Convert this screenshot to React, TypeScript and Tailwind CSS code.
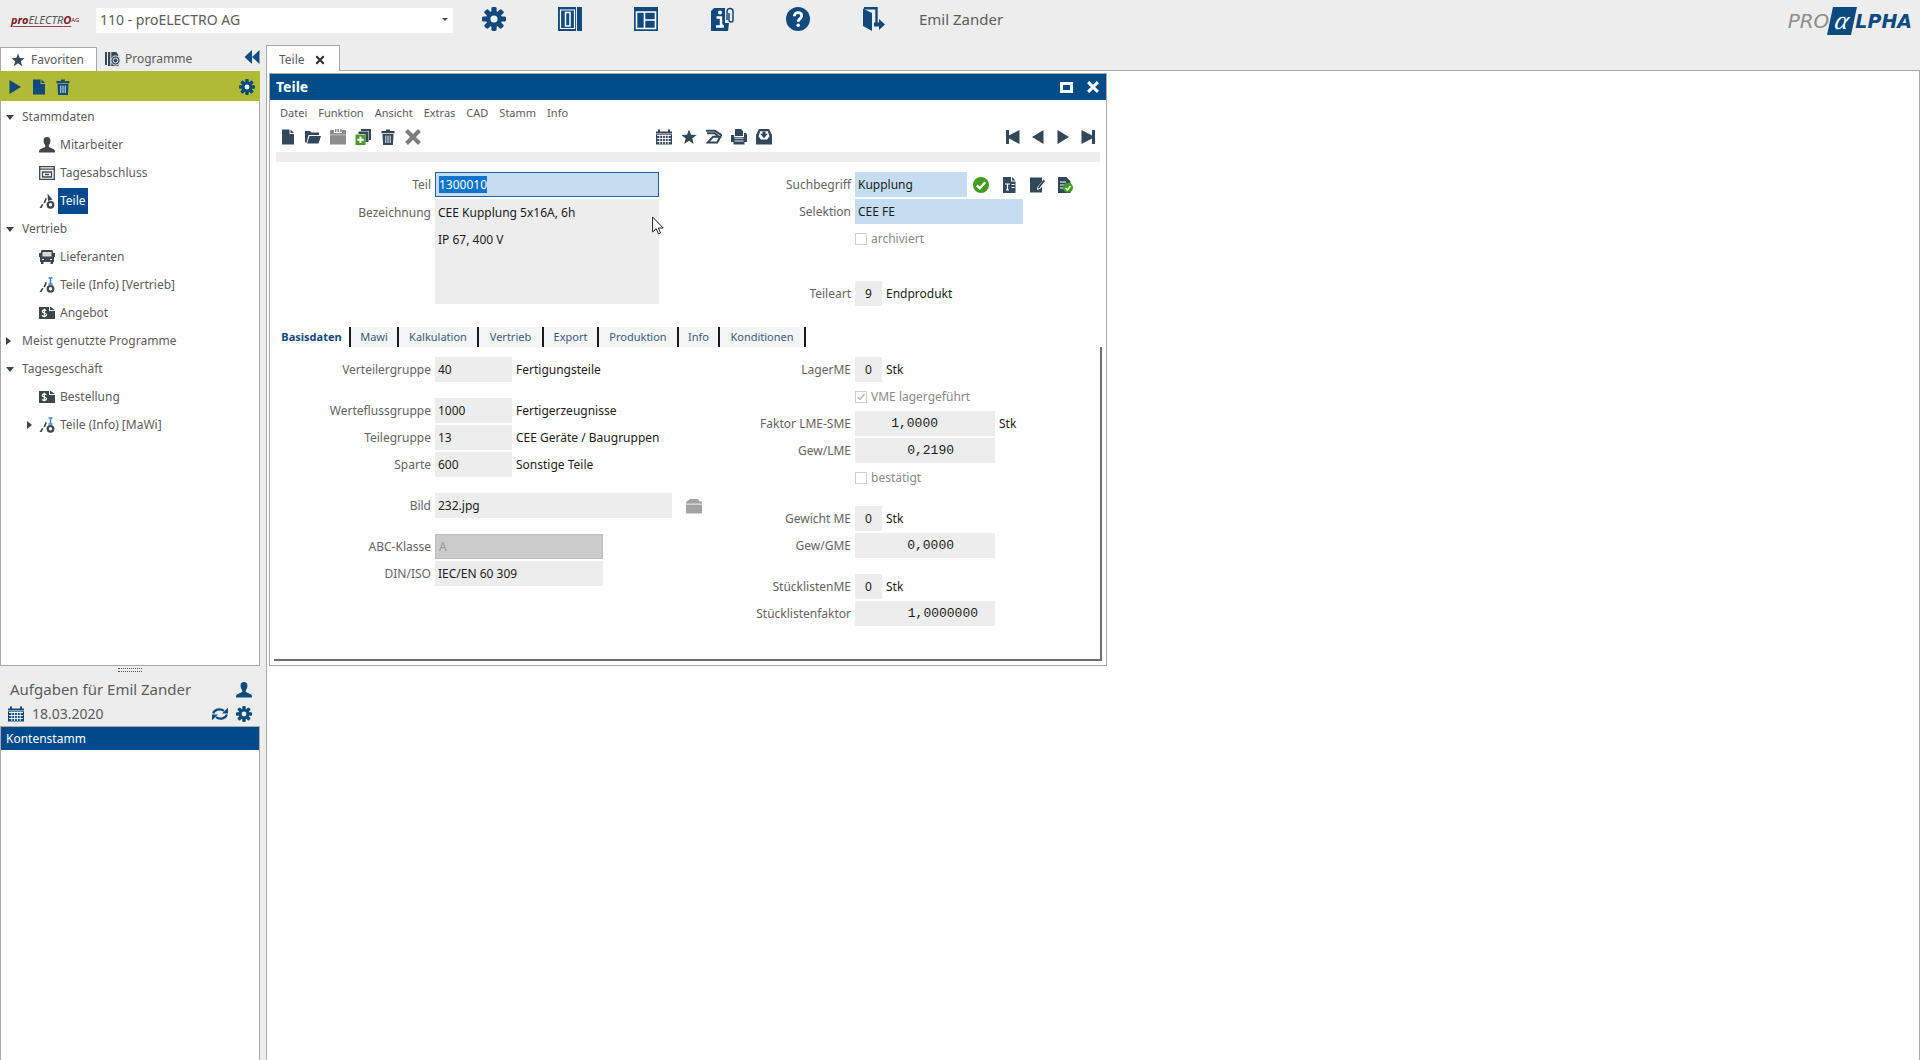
import React, { useEffect, useId, useRef } from "react";

type IconProps = { className?: string };

function Svg({ className = "size-4", box = 16, children }: IconProps & { box?: number; children: React.ReactNode }) {
  return (
    <svg viewBox={`0 0 ${box} ${box}`} className={className} fill="currentColor" aria-hidden="true">
      {children}
    </svg>
  );
}

const Gear = ({ className }: IconProps) => (
  <Svg className={className} box={24}>
    {[0, 45, 90, 135].map((a) => (
      <rect key={a} x="9.4" y="0" width="5.2" height="24" rx="1.4" transform={`rotate(${a} 12 12)`} />
    ))}
    <circle cx="12" cy="12" r="8" />
    <circle cx="12" cy="12" r="3.6" className="fill-[#f1f1f1]" />
  </Svg>
);
const SidePanel = ({ className }: IconProps) => (
  <Svg className={className} box={24}>
    <path d="M0 0h24v24H0z" />
    <path d="M2.500 3h14v18.500h-14z" fill="none" stroke="#fff" strokeWidth="1.2" />
    <path d="M7.500 5.500h4.500V19H7.500z" fill="none" stroke="#fff" strokeWidth="1.500" />
    <path d="M18.500 0v24" stroke="#dbe6ef" strokeWidth="1" />
  </Svg>
);
const LayoutGrid = ({ className }: IconProps) => (
  <Svg className={className} box={24}>
    <path d="M0 0h24v24H0z" />
    <path d="M2.500 5h19v16.500h-19zM10.500 5v16.500M10.500 13h11" fill="none" stroke="#fff" strokeWidth="1.6" />
  </Svg>
);
const InfoClip = ({ className }: IconProps) => (
  <Svg className={className} box={24}>
    <path d="M1 4l3-3h11v15h4l-1 8H1z" />
    <circle cx="10" cy="5.500" r="2" fill="#fff" />
    <path d="M6.500 10.500H11v8h2M6 19.500h8" fill="none" stroke="#fff" strokeWidth="2.4" />
    <path d="M17 13V4.500a3 3 0 0 1 6 0v8.500a2 2 0 0 1-4 0V6" fill="none" stroke="currentColor" strokeWidth="1.500" />
  </Svg>
);
const Help = ({ className }: IconProps) => (
  <Svg className={className} box={24}>
    <circle cx="12" cy="12" r="12" />
    <path d="M8.300 9.300c0-5 7.600-4.800 7.400-.3-.1 2.600-3.500 2.600-3.500 5.700" fill="none" stroke="#fff" strokeWidth="2.800" />
    <circle cx="12.200" cy="18.300" r="1.700" fill="#fff" />
  </Svg>
);
const Exit = ({ className }: IconProps) => (
  <Svg className={className} box={24}>
    <path d="M1 1.500L10 6v18l-9-5z" />
    <path d="M2 1.200h12.500V16" fill="none" stroke="currentColor" strokeWidth="2.400" />
    <path d="M12 15.500h5V12l6 5.500-6 5.500v-3.500h-5z" />
  </Svg>
);
const Star = ({ className }: IconProps) => (
  <Svg className={className}>
    <path d="M8 .5l2 5.200 5.600.2-4.400 3.500 1.600 5.600L8 11.800 3.200 15l1.600-5.600L.4 5.900 6 5.700z" />
  </Svg>
);
const Programs = ({ className }: IconProps) => (
  <Svg className={className}>
    <path d="M0 1h2v13H0zM3 1h2.300v14H3zM6.300 1h5l2 3v11h-7z" />
    <circle cx="10.500" cy="9.500" r="4.600" stroke="#ededed" strokeWidth="1" />
    <circle cx="10.500" cy="9.500" r="2.400" fill="none" stroke="#ededed" strokeWidth="1" />
  </Svg>
);
const Collapse = ({ className }: IconProps) => (
  <Svg className={className}>
    <path d="M8 1v14L.5 8zM15.500 1v14L8 8z" />
  </Svg>
);
const Page = ({ className }: IconProps) => (
  <Svg className={className}>
    <path d="M2 .5h7.500V5H14v10.500H2z" />
    <path d="M10.500.5L14 4h-3.500z" />
  </Svg>
);
const Trash = ({ className }: IconProps) => (
  <Svg className={className}>
    <path d="M1.500 2H6V.5h4V2h4.500v2.200h-13zM2.500 5h11l-.6 11H3.100z" />
    <path d="M5.800 6.500V14M8 6.500V14M10.200 6.500V14" stroke="#fff" strokeWidth=".9" />
  </Svg>
);
const Person = ({ className }: IconProps) => (
  <Svg className={className}>
    <path d="M8 0c2.400 0 3.500 1.700 3.400 3.900C11.300 6 10.600 7.300 9.800 8v2l5 2.300c.8.400 1.200 1.300 1.200 3.200H0c0-1.900.4-2.800 1.200-3.200l5-2.300V8c-.8-.7-1.500-2-1.600-4.100C4.500 1.700 5.600 0 8 0z" />
  </Svg>
);
const DayEnd = ({ className }: IconProps) => (
  <Svg className={className}>
    <path d="M.7 1.700h14.600v12.600H.7z" fill="none" stroke="currentColor" strokeWidth="1.300" />
    <path d="M.7 4.200h14.600M3.500 7h9v5h-9zM6 9.500h4" fill="none" stroke="currentColor" strokeWidth="1.300" />
  </Svg>
);
const Parts = ({ className, info }: IconProps & { info?: boolean }) => (
  <Svg className={className}>
    <path d="M.5 15L3 11l1.500.6-2 3.400zM4.500 9.500L6.500 5l1.500.5-2 5z" />
    <circle cx="11.500" cy="11.800" r="2.800" fill="none" stroke="currentColor" strokeWidth="2.200" />
    {info ? (
      <path d="M9.500 1h4M11.500 1v6M9.500 7h4" stroke="#3f86bd" strokeWidth="1.500" />
    ) : (
      <path d="M8.500.5l5 6-4.500 1.500z" />
    )}
  </Svg>
);
const Truck = ({ className }: IconProps) => (
  <Svg className={className}>
    <path d="M2.500 1h11l.8 3H16v4h-1v5h-1v2h-2.500v-2h-7v2H2v-2H1V8H0V4h1.700z" />
    <path d="M3.500 3h9v4.500h-9z" fill="#d5d9dc" />
    <path d="M3 10.500h2M11 10.500h2" stroke="#fff" strokeWidth="1.200" />
  </Svg>
);
const MoneyDoc = ({ className }: IconProps) => (
  <Svg className={className}>
    <path d="M0 2h10v4h6v8H0z" />
    <path d="M11 1.500l4.800 3.500H11z" />
    <path d="M7.300 5.700c-1-1.200-4-1-4 .7 0 2 4.200 1.200 4.200 3.400 0 1.800-3.400 2-4.500.5M5.400 3.800v8.400" fill="none" stroke="#fff" strokeWidth="1.200" />
  </Svg>
);
const Calendar = ({ className }: IconProps) => (
  <Svg className={className}>
    <path d="M0 2.500h2V.5h2v2h8v-2h2v2h2v13H0z" />
    <path d="M1 6.500h14M1 9.500h14M1 12.500h14M3.800 5.500v9.500M6.600 5.500v9.500M9.400 5.500v9.500M12.200 5.500v9.500" stroke="#fff" strokeWidth=".9" />
    <path d="M0 4.800h16" stroke="#fff" strokeWidth=".7" />
  </Svg>
);
const Refresh = ({ className }: IconProps) => (
  <Svg className={className}>
    <path d="M1.200 7.500C2 3.800 8 1.800 12 4.800M14.800 8.500C14 12.200 8 14.200 4 11.200" fill="none" stroke="currentColor" strokeWidth="2.200" />
    <path d="M10 7.500h6V1.800zM6 8.500H0v5.700z" />
  </Svg>
);
const FolderOpen = ({ className }: IconProps) => (
  <Svg className={className}>
    <path d="M0 2h5l1.500 1.500H14V6H3.500L1.500 14 0 13z" />
    <path d="M4.500 7H16l-2.500 7.500H2.200z" />
  </Svg>
);
const Folder = ({ className }: IconProps) => (
  <Svg className={className}>
    <path d="M0 4l4-3h8l1 2 3 .5V6H0zM0 6.500h16v9H0z" />
    <path d="M0 5.800h16" stroke="#d5d5d5" strokeWidth=".8" />
  </Svg>
);
const Clipboard = ({ className }: IconProps) => (
  <Svg className={className}>
    <path d="M0 1h4v3h8V1h4v14.500H0z" />
    <path d="M5 0h1.500v3H5zM7.500 0H9v3H7.500zM10 0h1.500v3H10z" />
    <path d="M0 5.800h16" stroke="#cfcfcf" strokeWidth=".8" />
  </Svg>
);
const CopyAdd = ({ className }: IconProps) => (
  <Svg className={className}>
    <path d="M6 0h10v11h-2V2H6zM3.500 2.500h10V13h-3V5h-7z" />
    <path d="M.5 5.500h10V16H.5z" className="fill-[#4b9a2c]" />
    <path d="M5.500 7.500v6.500M2.300 10.700h6.500" stroke="#fff" strokeWidth="2" />
  </Svg>
);
const Cross = ({ className }: IconProps) => (
  <Svg className={className}>
    <path d="M1.500 1.500l13 13M14.500 1.500l-13 13" stroke="currentColor" strokeWidth="4" />
  </Svg>
);
const Flow = ({ className }: IconProps) => (
  <Svg className={className}>
    <path d="M0 1.800h9L15.200 6l-4 7.500H1.800L7 7.800h6L8.500 4.300H1" fill="none" stroke="currentColor" strokeWidth="2" />
  </Svg>
);
const Printer = ({ className }: IconProps) => (
  <Svg className={className}>
    <path d="M4 0h6l2 2v5H4zM0 6h3.200v2H13V4h2l1 2v7h-2.500v2.500h-11V13H0z" />
    <path d="M3.500 9.200h9M3.500 12h9" stroke="#fff" strokeWidth=".9" />
  </Svg>
);
const Archive = ({ className }: IconProps) => (
  <Svg className={className}>
    <path d="M3 0h10l3 6v9.500H0V6z" />
    <path d="M4.200 2.200h7.600l1.700 5.300-2.500 3H5l-2.500-3z" fill="#fff" />
    <path d="M6.500 2.500h3v2.300h2.300L8 9.300 4.200 4.800h2.300z" />
  </Svg>
);
const First = ({ className }: IconProps) => (
  <Svg className={className}>
    <path d="M1 1h3v5.500L14.500 1v14L4 9.500V15H1z" />
  </Svg>
);
const Prev = ({ className }: IconProps) => (
  <Svg className={className}>
    <path d="M13.500 1v14L2 8z" />
  </Svg>
);
const Next = ({ className }: IconProps) => (
  <Svg className={className}>
    <path d="M2.500 1v14L14 8z" />
  </Svg>
);
const Last = ({ className }: IconProps) => (
  <Svg className={className}>
    <path d="M15 1h-3v5.500L1.500 1v14L12 9.500V15h3z" />
  </Svg>
);
const Check = ({ className }: IconProps) => (
  <Svg className={className}>
    <circle cx="8" cy="8" r="8" className="fill-[#3f9c1f]" />
    <path d="M3.800 8.300l3 2.900 5.400-6" fill="none" stroke="#fff" strokeWidth="2.400" />
  </Svg>
);
const TextDoc = ({ className }: IconProps) => (
  <Svg className={className}>
    <path d="M2 0h8v4.500h4.500V16H2z" />
    <path d="M11 0l3.500 3.500H11z" />
    <path d="M4 7h5M6.500 7v6M5 13h3M10.500 7.500h3M10.500 10.500h3" stroke="#fff" strokeWidth="1.200" />
  </Svg>
);
const EditDoc = ({ className }: IconProps) => (
  <Svg className={className}>
    <path d="M1 .5h12v4L8.500 10l-.5 3 3-1 2-2.500V15.500H1z" />
    <path d="M14.500 2.500L16 4l-5.500 7-1.700.5.500-1.700z" />
  </Svg>
);
const CheckDoc = ({ className }: IconProps) => (
  <Svg className={className}>
    <path d="M1 0h8.500l4 4.500V16H1z" />
    <path d="M3 5h6M3 8h5M3 11h4" stroke="#fff" strokeWidth="1.200" />
    <circle cx="11" cy="10.800" r="5" className="fill-[#3f9c1f]" />
    <path d="M8.500 11l2 1.800 3-3.800" fill="none" stroke="#fff" strokeWidth="1.600" />
  </Svg>
);
const Pointer = ({ className }: IconProps) => (
  <svg viewBox="0 0 12 19" className={className} aria-hidden="true">
    <path d="M.6 1v15l3.600-3.300 2.400 5.300 2-1-2.300-5h4.900z" fill="#fff" stroke="#222" strokeWidth="1" />
  </svg>
);

function IconButton({ label, children, className = "" }: { label: string; children: React.ReactNode; className?: string }) {
  return (
    <button type="button" aria-label={label} className={`shrink-0 ${className}`}>
      {children}
    </button>
  );
}

function TopBar() {
  const icon = "size-6";
  return (
    <header className="flex h-[45px] items-start pt-[7px]">
      <div className="flex h-[26px] w-24 items-center pl-[11px]">
        <span className="text-[11px] leading-4 italic text-[#555] underline decoration-[#a04040] decoration-1 underline-offset-2">
          <b className="text-[#7e1322]">pro</b>ELECTR<b className="text-[#7e1322]">O</b>
        </span>
        <span className="text-[6px] text-[#7e1322]">AG</span>
      </div>
      <div className="relative">
        <select aria-label="Mandant" className="h-[25px] w-[357px] appearance-none bg-white pl-1 text-sm leading-6 text-[#5c5c5c]">
          <option>110 - proELECTRO AG</option>
        </select>
        <span className="pointer-events-none absolute top-[11px] right-[5px] border-x-3 border-t-3 border-x-transparent border-t-[#444]" />
      </div>
      <nav className="ml-[29px] flex gap-[52px] text-[#12497c]">
        <IconButton label="Einstellungen"><Gear className={icon} /></IconButton>
        <IconButton label="Seitenleiste"><SidePanel className={icon} /></IconButton>
        <IconButton label="Layout"><LayoutGrid className={icon} /></IconButton>
        <IconButton label="Informationen"><InfoClip className={icon} /></IconButton>
        <IconButton label="Hilfe"><Help className={icon} /></IconButton>
        <IconButton label="Abmelden"><Exit className={icon} /></IconButton>
      </nav>
      <span className="ml-[33px] text-[15px] leading-6 text-[#5c5c5c]">Emil Zander</span>
      <div className="mr-2 ml-auto flex h-7 items-center gap-px font-['DejaVu_Sans',sans-serif] text-xl leading-7 italic">
        <span className="text-[#8d8d8d]">PRO</span>
        <span className="flex h-7 w-6 -skew-x-12 items-center justify-center bg-[#0b4a80] font-['Liberation_Serif',serif] text-[26px] text-white">α</span>
        <span className="text-[19px] font-bold text-[#0b4a80]">LPHA</span>
      </div>
    </header>
  );
}

type Leaf = { label: string; icon: React.ReactNode; active?: boolean; nested?: boolean };
const ic = "size-4";
const tree: { label: string; open: boolean; items: Leaf[] }[] = [
  {
    label: "Stammdaten",
    open: true,
    items: [
      { label: "Mitarbeiter", icon: <Person className={ic} /> },
      { label: "Tagesabschluss", icon: <DayEnd className={ic} /> },
      { label: "Teile", icon: <Parts className={ic} />, active: true },
    ],
  },
  {
    label: "Vertrieb",
    open: true,
    items: [
      { label: "Lieferanten", icon: <Truck className={ic} /> },
      { label: "Teile (Info) [Vertrieb]", icon: <Parts className={ic} info /> },
      { label: "Angebot", icon: <MoneyDoc className={ic} /> },
    ],
  },
  { label: "Meist genutzte Programme", open: false, items: [] },
  {
    label: "Tagesgeschäft",
    open: true,
    items: [
      { label: "Bestellung", icon: <MoneyDoc className={ic} /> },
      { label: "Teile (Info) [MaWi]", icon: <Parts className={ic} info />, nested: true },
    ],
  },
];

const arrowRight = "border-y-4 border-l-5 border-y-transparent border-l-[#3d464d]";
const arrowDown = "border-x-4 border-t-5 border-x-transparent border-t-[#3d464d]";

function Sidebar() {
  return (
    <aside className="flex w-[260px] shrink-0 flex-col pt-0.5">
      <div className="flex h-6 text-xs text-[#5c5c5c]">
        <button type="button" className="flex w-[97px] items-center gap-1.5 border border-b-0 border-[#a9a9a9] bg-white pl-2.5">
          <Star className="size-3.5 text-[#34495a]" />
          Favoriten
        </button>
        <button type="button" className="flex items-center gap-1 pl-2">
          <Programs className="size-4 text-[#34495a]" />
          Programme
        </button>
        <IconButton label="Leiste einklappen" className="mt-0.5 ml-auto h-4 text-[#0d4b85]"><Collapse className="size-4" /></IconButton>
      </div>
      <div className="flex h-[30px] items-center gap-2 bg-[#b0ba35] pt-0.5 pr-[5px] pl-[7px] text-[#0d4b7c]">
        <IconButton label="Starten"><Next className="size-4" /></IconButton>
        <IconButton label="Neu"><Page className="size-4" /></IconButton>
        <IconButton label="Löschen"><Trash className="size-4" /></IconButton>
        <IconButton label="Favoriten einstellen" className="ml-auto"><Gear className="size-4" /></IconButton>
      </div>
      <ul className="h-[565px] shrink-0 overflow-hidden border border-t-0 border-[#a9a9a9] bg-white pt-0.5 text-xs text-[#5c5c5c]">
        {tree.map((g) => (
          <li key={g.label}>
            <button type="button" className="flex h-7 items-center">
              <span className="flex w-[21px] justify-start pl-[5px]">
                <span className={g.open ? arrowDown : arrowRight} />
              </span>
              {g.label}
            </button>
            {g.items.length > 0 && (
              <ul className="ml-7">
                {g.items.map((i) => (
                  <li key={i.label} className="relative">
                    {i.nested && <span className={`absolute top-2.5 -left-0.5 ${arrowRight}`} />}
                    <button type="button" className="flex h-7 items-center gap-[3px] pl-2.5 text-[#3d464d]">
                      {i.icon}
                      <span className={i.active ? "bg-[#00498a] px-0.5 leading-[26px] text-white" : "px-0.5 text-[#5c5c5c]"}>{i.label}</span>
                    </button>
                  </li>
                ))}
              </ul>
            )}
          </li>
        ))}
      </ul>
      <div className="flex h-2 justify-center pt-0.5">
        <span className="h-1 w-6 border-y border-dotted border-[#555]" />
      </div>
      <section className="flex flex-1 flex-col pt-px">
        <div className="flex h-[29px] items-center justify-between pr-2 pl-2.5 text-[#5c5c5c]">
          <h2 className="text-[15px]">Aufgaben für Emil Zander</h2>
          <Person className="size-4 text-[#0d4b7c]" />
        </div>
        <div className="flex h-5 items-center pr-2 pl-2 text-sm text-[#5c5c5c]">
          <Calendar className="size-4 text-[#0d4b7c]" />
          <span className="pl-2">18.03.2020</span>
          <span className="ml-auto flex gap-2 text-[#0d4b7c]">
            <IconButton label="Aktualisieren"><Refresh className="size-4" /></IconButton>
            <IconButton label="Aufgaben einstellen"><Gear className="size-4" /></IconButton>
          </span>
        </div>
        <ul className="mt-0.5 flex-1 border border-b-0 border-[#a9a9a9] bg-white text-xs">
          <li className="bg-[#00498a]"><button type="button" className="h-[23px] pl-[5px] text-white">Kontenstamm</button></li>
        </ul>
      </section>
    </aside>
  );
}

const fieldBase = "h-[25px] rounded-none px-[3px] text-xs leading-[17px] text-[#1c1c1c] outline-none";

function Row({
  label,
  value,
  width,
  tone = "bg-[#ededed]",
  after,
  wide,
  inputRef,
}: {
  label: string;
  value: string;
  width: string;
  tone?: string;
  after?: React.ReactNode;
  wide?: boolean;
  inputRef?: React.Ref<HTMLInputElement>;
}) {
  const id = useId();
  return (
    <div className="flex h-[27px] items-center gap-1 text-xs">
      <label htmlFor={id} className={`shrink-0 text-right text-[#636363] ${wide ? "w-[157px]" : "w-[120px]"}`}>{label}</label>
      <input id={id} ref={inputRef} defaultValue={value} className={`${fieldBase} ${width} ${tone}`} />
      {after}
    </div>
  );
}

function CheckRow({ label, checked }: { label: string; checked?: boolean }) {
  return (
    <label className="flex h-[27px] items-center gap-1 pl-[124px] text-xs text-[#8a8a8a]">
      <span className="relative flex size-3">
        <input type="checkbox" defaultChecked={checked} disabled className="size-3 appearance-none border border-[#cfcfcf] bg-white" />
        {checked && (
          <svg viewBox="0 0 12 12" className="pointer-events-none absolute size-3" fill="none" stroke="#b5b5b5" strokeWidth="1.4" aria-hidden="true">
            <path d="M2.500 6l2.500 2.500L9.500 3" />
          </svg>
        )}
      </span>
      {label}
    </label>
  );
}

const mono = "font-['Liberation_Mono',monospace] text-[13px] text-right bg-[#ededed]";
const note = (t: string) => <span className="text-[#1c1c1c]">{t}</span>;
const tabs = [
  { label: "Basisdaten", width: "w-[77px]" },
  { label: "Mawi", width: "w-12" },
  { label: "Kalkulation", width: "w-20" },
  { label: "Vertrieb", width: "w-[65px]" },
  { label: "Export", width: "w-[55px]" },
  { label: "Produktion", width: "w-20" },
  { label: "Info", width: "w-[41px]" },
  { label: "Konditionen", width: "w-[86px]" },
];

function PartsWindow() {
  const part = useRef<HTMLInputElement>(null);
  useEffect(() => {
    part.current?.focus();
    part.current?.select();
  }, []);
  const abc = useId();
  const desc = useId();
  return (
    <section className="relative mt-0.5 ml-0.5 w-[838px] border border-[#a9a9a9] bg-[#fefefe]">
      <div className="flex h-[26px] items-center bg-[#004c86] pr-[7px] pl-1.5 text-white">
        <h1 className="text-sm font-bold">Teile</h1>
        <button type="button" aria-label="Maximieren" className="ml-auto h-[11px] w-[13px] border-3 border-white" />
        <IconButton label="Schließen" className="ml-3.5"><Cross className="size-3" /></IconButton>
      </div>
      <nav className="flex h-[26px] items-center gap-[11px] pl-2.5 text-[11px] text-[#5c5c5c]">
        {["Datei", "Funktion", "Ansicht", "Extras", "CAD", "Stamm", "Info"].map((m) => (
          <button key={m} type="button">{m}</button>
        ))}
      </nav>
      <div className="flex h-[22px] items-center pr-2.5 pl-2.5 text-[#33475a]">
        <div className="flex gap-[9px]">
          <IconButton label="Neu"><Page /></IconButton>
          <IconButton label="Öffnen"><FolderOpen /></IconButton>
          <IconButton label="Einfügen" className="text-[#8c8c8c]"><Clipboard /></IconButton>
          <IconButton label="Kopieren"><CopyAdd /></IconButton>
          <IconButton label="Löschen"><Trash /></IconButton>
          <IconButton label="Abbrechen" className="text-[#7d7d7d]"><Cross /></IconButton>
        </div>
        <div className="ml-[235px] flex gap-[9px]">
          <IconButton label="Kalender"><Calendar /></IconButton>
          <IconButton label="Favorit"><Star /></IconButton>
          <IconButton label="Ablauf"><Flow /></IconButton>
          <IconButton label="Drucken"><Printer /></IconButton>
          <IconButton label="Archiv"><Archive /></IconButton>
        </div>
        <div className="ml-auto flex gap-[9px]">
          <IconButton label="Erster"><First /></IconButton>
          <IconButton label="Vorheriger"><Prev /></IconButton>
          <IconButton label="Nächster"><Next /></IconButton>
          <IconButton label="Letzter"><Last /></IconButton>
        </div>
      </div>
      <div className="mx-1.5 mt-1 h-2.5 bg-[#ededed]" />

      <div className="flex pt-[9px] pl-1">
        <div className="w-[457px]">
          <Row wide label="Teil" value="1300010" width="w-56" tone="border border-[#1f5f9c] bg-[#c5dcf1] selection:bg-[#0f74cb] selection:text-white" inputRef={part} />
          <div className="flex gap-1 pt-px text-xs">
            <label htmlFor={desc} className="w-[157px] text-right leading-[27px] text-[#636363]">Bezeichnung</label>
            <textarea
              id={desc}
              rows={4}
              defaultValue={"CEE Kupplung 5x16A, 6h\nIP 67, 400 V"}
              className="h-[105px] w-56 resize-none overflow-hidden bg-[#ededed] px-[3px] leading-[27px] text-[#1c1c1c] outline-none"
            />
          </div>
        </div>
        <div className="flex-1">
          <Row
            label="Suchbegriff"
            value="Kupplung"
            width="w-28"
            tone="bg-[#c5dcf1]"
            after={
              <span className="flex gap-3 pl-0.5 text-[#33475a]">
                <IconButton label="Prüfen"><Check /></IconButton>
                <IconButton label="Text"><TextDoc /></IconButton>
                <IconButton label="Bearbeiten"><EditDoc /></IconButton>
                <IconButton label="Freigeben"><CheckDoc /></IconButton>
              </span>
            }
          />
          <Row label="Selektion" value="CEE FE" width="w-[168px]" tone="bg-[#c5dcf1]" />
          <CheckRow label="archiviert" />
          <div className="h-7" />
          <Row label="Teileart" value="9" width="w-[27px]" tone="bg-[#ededed] text-center" after={note("Endprodukt")} />
        </div>
      </div>

      <div role="tablist" className="mt-5 flex h-5 pl-1 text-[11px] leading-5">
        {tabs.map((t, i) => (
          <button
            key={t.label}
            type="button"
            role="tab"
            aria-selected={i === 0}
            className={`border-r-2 border-[#1a1a1a] ${t.width} ${i === 0 ? "font-bold text-[#12497c]" : "bg-[#f3f5f7] text-[#3c5a7a]"}`}
          >
            {t.label}
          </button>
        ))}
      </div>
      <div className="mx-1 mb-1 flex h-[314px] border-r-2 border-b-2 border-[#6e6e6e] pt-[9px]">
        <div className="w-[457px]">
          <Row wide label="Verteilergruppe" value="40" width="w-[77px]" after={note("Fertigungsteile")} />
          <div className="h-3.5" />
          <Row wide label="Werteflussgruppe" value="1000" width="w-[77px]" after={note("Fertigerzeugnisse")} />
          <Row wide label="Teilegruppe" value="13" width="w-[77px]" after={note("CEE Geräte / Baugruppen")} />
          <Row wide label="Sparte" value="600" width="w-[77px]" after={note("Sonstige Teile")} />
          <div className="h-3.5" />
          <Row
            wide
            label="Bild"
            value="232.jpg"
            width="w-[237px]"
            after={<IconButton label="Bild wählen" className="pl-2.5 text-[#a3a3a3]"><Folder /></IconButton>}
          />
          <div className="h-3.5" />
          <div className="flex h-[27px] items-center gap-1 text-xs">
            <label htmlFor={abc} className="w-[157px] text-right text-[#636363]">ABC-Klasse</label>
            <select id={abc} disabled className="h-[25px] w-[168px] appearance-none border border-[#bdbdbd] bg-[#cbcbcb] px-[3px] text-[#9a9a9a] opacity-100">
              <option>A</option>
            </select>
          </div>
          <Row wide label="DIN/ISO" value="IEC/EN 60 309" width="w-[168px]" />
        </div>
        <div className="flex-1">
          <Row label="LagerME" value="0" width="w-[27px]" tone="bg-[#ededed] text-center" after={note("Stk")} />
          <CheckRow label="VME lagergeführt" checked />
          <Row label="Faktor LME-SME" value="1,0000" width="w-[140px]" tone={`${mono} pr-[57px]`} after={note("Stk")} />
          <Row label="Gew/LME" value="0,2190" width="w-[140px]" tone={`${mono} pr-[41px]`} />
          <CheckRow label="bestätigt" />
          <div className="h-3.5" />
          <Row label="Gewicht ME" value="0" width="w-[27px]" tone="bg-[#ededed] text-center" after={note("Stk")} />
          <Row label="Gew/GME" value="0,0000" width="w-[140px]" tone={`${mono} pr-[41px]`} />
          <div className="h-3.5" />
          <Row label="StücklistenME" value="0" width="w-[27px]" tone="bg-[#ededed] text-center" after={note("Stk")} />
          <Row label="Stücklistenfaktor" value="1,0000000" width="w-[140px]" tone={`${mono} pr-[17px]`} />
        </div>
      </div>
      <Pointer className="pointer-events-none absolute top-[142px] left-[382px] h-[19px] w-3" />
    </section>
  );
}

export default function App() {
  return (
    <div className="flex h-screen flex-col overflow-hidden bg-[#ededed] font-['Noto_Sans',sans-serif]">
      <TopBar />
      <div className="flex min-h-0 flex-1 gap-1.5">
        <Sidebar />
        <main className="flex min-w-0 flex-1 flex-col">
          <div className="z-10 -mb-px flex h-[26px] w-[74px] items-center gap-2.5 border border-b-0 border-[#a9a9a9] bg-white pt-0.5 pl-3 text-xs text-[#5c5c5c]">
            Teile
            <IconButton label="Tab schließen" className="text-[#333]">
              <Svg className="size-2.5"><path d="M2 2l12 12M14 2L2 14" stroke="currentColor" strokeWidth="3.500" /></Svg>
            </IconButton>
          </div>
          <div className="flex-1 border border-b-0 border-[#a9a9a9] bg-white">
            <PartsWindow />
          </div>
        </main>
      </div>
    </div>
  );
}
